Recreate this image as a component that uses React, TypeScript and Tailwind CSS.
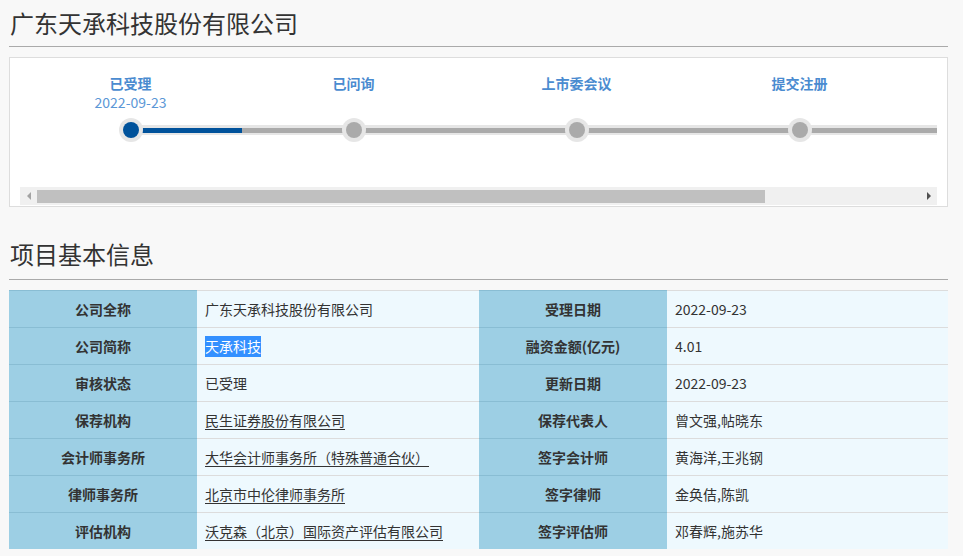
import React from 'react';

const steps = [
  { name: '已受理', date: '2022-09-23', done: true },
  { name: '已问询', date: '', done: false },
  { name: '上市委会议', date: '', done: false },
  { name: '提交注册', date: '', done: false },
];

const rows: { l1: string; v1: string; link1?: boolean; sel1?: boolean; l2: string; v2: string }[] = [
  { l1: '公司全称', v1: '广东天承科技股份有限公司', l2: '受理日期', v2: '2022-09-23' },
  { l1: '公司简称', v1: '天承科技', sel1: true, l2: '融资金额(亿元)', v2: '4.01' },
  { l1: '审核状态', v1: '已受理', l2: '更新日期', v2: '2022-09-23' },
  { l1: '保荐机构', v1: '民生证券股份有限公司', link1: true, l2: '保荐代表人', v2: '曾文强,帖晓东' },
  { l1: '会计师事务所', v1: '大华会计师事务所（特殊普通合伙）', link1: true, l2: '签字会计师', v2: '黄海洋,王兆钢' },
  { l1: '律师事务所', v1: '北京市中伦律师事务所', link1: true, l2: '签字律师', v2: '金奂佶,陈凯' },
  { l1: '评估机构', v1: '沃克森（北京）国际资产评估有限公司', link1: true, l2: '签字评估师', v2: '邓春辉,施苏华' },
];

const font = { fontFamily: '"Noto Sans CJK SC", "Noto Sans", sans-serif' };

function Heading({ children, pad }: { children: React.ReactNode; pad: string }) {
  return (
    <div className={`${pad} border-b border-[#aaaaaa]`}>
      <h1 className="text-[24px] leading-[32px] text-[#333] pl-[1px]">{children}</h1>
    </div>
  );
}

function Timeline() {
  return (
    <div className="mt-[10px] border border-[#dddddd] bg-white px-[10px] pt-[15px] pb-[1px]">
      <div className="overflow-hidden h-[114px]">
        <div className="relative flex w-[1115px] -ml-[1px]">
          <div className="absolute left-[111px] right-0 top-[52px] h-[10px] bg-[#e6e6e6]" />
          <div className="absolute left-[111px] right-0 top-[55px] h-[5px] bg-[#aaaaaa]" />
          <div className="absolute left-[111px] w-[112px] top-[55px] h-[5px] bg-[#00529b]" />
          {steps.map((s) => (
            <div key={s.name} className="relative w-[223px] shrink-0 flex flex-col items-center">
              <div className="h-[45px] flex flex-col items-center">
                <div className="text-[14px] leading-[20px] font-bold text-[#4a8bd0]">{s.name}</div>
                {s.date && <div className="text-[14px] leading-[18px] text-[#5b97d6]">{s.date}</div>}
              </div>
              <div className="w-[24px] h-[24px] rounded-full bg-[#e6e6e6] flex items-center justify-center">
                <div className={`w-[16px] h-[16px] rounded-full ${s.done ? 'bg-[#00529b]' : 'bg-[#aaaaaa]'}`} />
              </div>
            </div>
          ))}
        </div>
      </div>
      <div className="h-[18px] bg-[#f0f0f0] flex items-center relative">
        <div className="w-[17px] h-full flex items-center justify-center">
          <div className="w-0 h-0 border-y-[4px] border-y-transparent border-r-[4px] border-r-[#a3a3a3]" />
        </div>
        <div className="w-[728px] h-[13px] bg-[#c0c0c0]" />
        <div className="absolute right-0 top-0 w-[17px] h-full flex items-center justify-center">
          <div className="w-0 h-0 border-y-[4px] border-y-transparent border-l-[4px] border-l-[#505050]" />
        </div>
      </div>
    </div>
  );
}

function Label({ children }: { children: React.ReactNode }) {
  return (
    <div className="bg-[#9dcfe4] border-t border-[#89bdd3] flex items-center justify-center text-[14px] font-bold text-[#333]">
      {children}
    </div>
  );
}

function Value({ children }: { children: React.ReactNode }) {
  return (
    <div className="bg-[#eef9fe] border-t border-[#dcdcdc] flex items-center pl-[8px] text-[14px] text-[#333]">
      {children}
    </div>
  );
}

export default function App() {
  return (
    <div className="min-h-[556px] bg-[#f8f8f8] pt-[2px] pl-[9px] pr-[15px]" style={font}>
      <Heading pad="pt-[5px] pb-[7px]">广东天承科技股份有限公司</Heading>
      <Timeline />
      <Heading pad="pt-[31px] pb-[9px]">项目基本信息</Heading>
      <div className="mt-[10px] grid grid-cols-[188px_282px_188px_1fr] auto-rows-[37px]">
        {rows.map((r) => (
          <React.Fragment key={r.l1}>
            <Label>{r.l1}</Label>
            <Value>
              {r.sel1 ? (
                <span className="bg-[#3390ff] text-white">{r.v1}</span>
              ) : r.link1 ? (
                <span className="underline underline-offset-[3px]">{r.v1}</span>
              ) : (
                r.v1
              )}
            </Value>
            <Label>{r.l2}</Label>
            <Value>{r.v2}</Value>
          </React.Fragment>
        ))}
      </div>
    </div>
  );
}
